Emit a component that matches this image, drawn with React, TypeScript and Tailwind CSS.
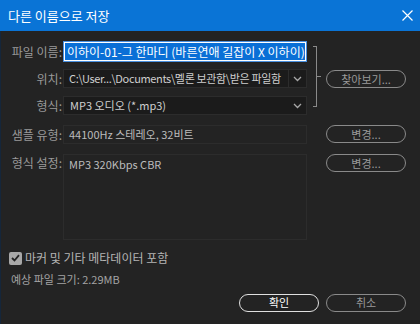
import React from "react";

const font = { fontFamily: '"Noto Sans CJK KR", "Noto Sans", sans-serif' };

function Chevron() {
  return (
    <svg width="9" height="6" viewBox="0 0 9 6" className="text-[#a8a8a8]">
      <path d="M1 1 L4.5 4.5 L8 1" fill="none" stroke="currentColor" strokeWidth="1.3" />
    </svg>
  );
}

function PillButton({ children, primary }: { children: React.ReactNode; primary?: boolean }) {
  return (
    <div
      className={`flex items-center justify-center h-[18px] rounded-full border-[1.5px] text-[11px] leading-none ${
        primary ? "border-[#e0e0e0] text-[#ffffff]" : "border-[#8a8a8a] text-[#9a9a9a]"
      }`}
    >
      {children}
    </div>
  );
}

export default function App() {
  return (
    <div className="w-[420px] h-[324px] bg-[#232323] flex flex-col overflow-hidden" style={font}>
      <div className="h-[31px] bg-[#0a74d6] flex items-center justify-between pl-[8px] pr-[7px] shrink-0">
        <span className="text-white text-[13px] leading-none">다른 이름으로 저장</span>
        <svg width="11" height="11" viewBox="0 0 11 11">
          <path d="M0.5 0.5 L10.5 10.5 M10.5 0.5 L0.5 10.5" stroke="#ffffff" strokeWidth="1.2" />
        </svg>
      </div>
      <div className="flex-1 border-l border-[#15263a] flex flex-col pl-[7px] pr-[14px]">
        <div className="flex mt-[10px]">
          <div className="flex flex-col">
            <div className="flex items-center h-[21px]">
              <span className="w-[54px] text-right text-[12px] text-[#9a9a9a]">파일 이름:</span>
              <div className="ml-[1px] w-[244px] h-[21px] border border-[#4a90e0] bg-[#ffffff] p-[1px] flex">
                <div className="flex-1 bg-[#0a6fd6] flex items-center pl-[2px] text-[12px] text-white whitespace-nowrap overflow-hidden">
                  이하이-01-그 한마디 (바른연애 길잡이 X 이하이)
                </div>
              </div>
            </div>
            <div className="flex items-center h-[19px] mt-[7px]">
              <span className="w-[54px] text-right text-[12px] text-[#9a9a9a]">위치:</span>
              <div className="ml-[1px] w-[244px] h-[19px] border border-[#2c2c2c] bg-[#1b1b1b] flex">
                <div className="flex-1 flex items-center pl-[5px] text-[11px] tracking-[-0.35px] text-[#cfcfcf] whitespace-nowrap overflow-hidden">
                  C:\User...\Documents\멜론 보관함\받은 파일함
                </div>
                <div className="w-[18px] border-l border-[#2c2c2c] flex items-center justify-center">
                  <Chevron />
                </div>
              </div>
            </div>
            <div className="flex items-center h-[19px] mt-[8px]">
              <span className="w-[54px] text-right text-[12px] text-[#9a9a9a]">형식:</span>
              <div className="ml-[1px] w-[244px] h-[19px] border border-[#2c2c2c] bg-[#1b1b1b] flex">
                <div className="flex-1 flex items-center pl-[6px] text-[11px] text-[#cfcfcf] whitespace-nowrap">
                  MP3 오디오 (*.mp3)
                </div>
                <div className="w-[18px] flex items-center justify-center">
                  <Chevron />
                </div>
              </div>
            </div>
          </div>
          <div className="ml-[6px] mt-[5px] h-[61px] w-[8px] flex">
            <div className="w-[4px] border-t border-b border-r border-[#8a8a8a]" />
            <div className="w-[4px] flex items-center">
              <div className="w-[4px] h-px bg-[#8a8a8a]" />
            </div>
          </div>
          <div className="ml-[5px] w-[80px] mt-[29px]">
            <PillButton>찾아보기...</PillButton>
          </div>
        </div>

        <div className="flex mt-[10px]">
          <div className="flex items-center h-[19px]">
            <span className="w-[54px] text-right text-[12px] text-[#9a9a9a]">샘플 유형:</span>
            <div className="ml-[1px] w-[244px] h-[19px] border border-[#2c2c2c] bg-[#232323] flex items-center pl-[5px] text-[11px] text-[#bcbcbc]">
              44100Hz 스테레오, 32비트
            </div>
          </div>
          <div className="ml-[19px] w-[80px]">
            <PillButton>변경...</PillButton>
          </div>
        </div>

        <div className="flex mt-[10px]">
          <div className="flex">
            <span className="w-[54px] text-right text-[12px] text-[#9a9a9a] leading-[18px]">형식 설정:</span>
            <div className="ml-[1px] w-[244px] h-[86px] border border-[#2c2c2c] bg-[#232323] pl-[5px] text-[11px] text-[#bcbcbc] leading-[18px]">
              MP3 320Kbps CBR
            </div>
          </div>
          <div className="ml-[19px] w-[80px]">
            <PillButton>변경...</PillButton>
          </div>
        </div>

        <div className="flex items-center mt-[9px] ml-[1px]">
          <div className="w-[13px] h-[13px] rounded-[2px] bg-[#a8a8a8] flex items-center justify-center">
            <svg width="9" height="8" viewBox="0 0 9 8">
              <path d="M1 4 L3.5 6.5 L8 1.2" fill="none" stroke="#232323" strokeWidth="1.8" />
            </svg>
          </div>
          <span className="ml-[3px] text-[12px] text-[#b4b4b4]">마커 및 기타 메타데이터 포함</span>
        </div>
        <div className="mt-[4px] ml-[3px] text-[11px] text-[#a4a4a4]">예상 파일 크기: 2.29MB</div>

        <div className="flex justify-end mt-[6px] gap-[7px]">
          <div className="w-[80px]">
            <PillButton primary>확인</PillButton>
          </div>
          <div className="w-[80px]">
            <PillButton>취소</PillButton>
          </div>
        </div>
      </div>
    </div>
  );
}
